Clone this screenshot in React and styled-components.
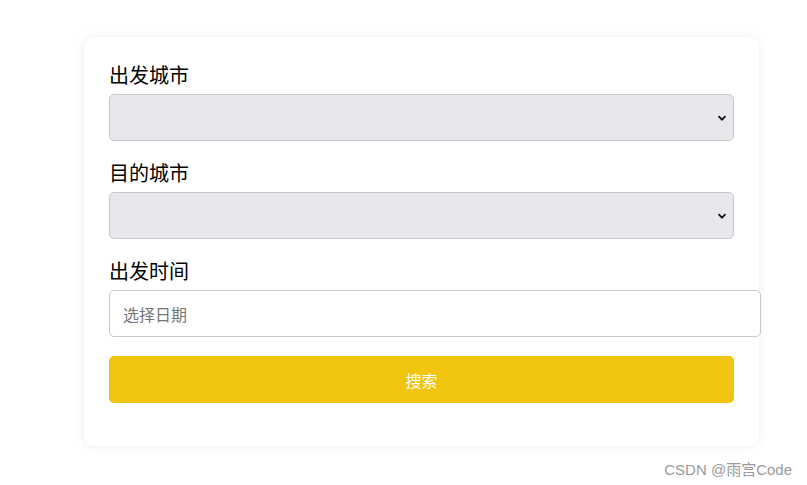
import React from "react";
import styled, { createGlobalStyle } from "styled-components";

const GlobalStyle = createGlobalStyle`
  body {
    margin: 0;
    background: #ffffff;
    font-family: "Microsoft YaHei", "Noto Sans CJK SC", "Noto Sans", sans-serif;
  }
`;

const Page = styled.div`
  position: relative;
  width: 807px;
  height: 485px;
  padding: 37px 0 0 84px;
  box-sizing: border-box;
`;

const Card = styled.form`
  width: 675px;
  box-sizing: border-box;
  padding: 25px 25px 43px;
  background: #ffffff;
  border-radius: 10px;
  box-shadow: 0 0 10px rgba(0, 0, 0, 0.08);
  display: flex;
  flex-direction: column;
  gap: 19px;
`;

const Field = styled.div`
  display: flex;
  flex-direction: column;
  gap: 6px;
`;

const Label = styled.label`
  font-size: 20px;
  line-height: 26px;
  color: #000000;
`;

const SelectWrap = styled.div`
  position: relative;
`;

const Select = styled.select`
  width: 100%;
  height: 47px;
  box-sizing: border-box;
  appearance: none;
  background: #e8e7eb;
  border: 1px solid #c9c9cc;
  border-radius: 5px;
  padding: 0 12px;
  font-size: 16px;
  font-family: inherit;
  outline: none;
`;

const Chevron = styled.svg`
  position: absolute;
  right: 7px;
  top: 50%;
  width: 10px;
  height: 10px;
  margin-top: -5px;
  pointer-events: none;
`;

const DateInput = styled.input`
  width: 100%;
  box-sizing: content-box;
  height: 45px;
  padding: 0 12px 0 13px;
  margin: 0;
  border: 1px solid #c9c9cc;
  border-radius: 5px;
  font-size: 16px;
  font-family: inherit;
  color: #333;
  outline: none;

  &::placeholder {
    color: #757575;
  }
`;

const SearchButton = styled.button`
  height: 47px;
  border: none;
  border-radius: 5px;
  background: #f1c40f;
  color: #ffffff;
  font-size: 16px;
  font-family: inherit;
  cursor: pointer;
`;

const Watermark = styled.div`
  position: absolute;
  right: 15px;
  top: 458px;
  font-size: 15px;
  color: #9a9a9a;
  font-family: "Liberation Sans", "Noto Sans CJK SC", sans-serif;
`;

const Dropdown = ({ label }) => (
  <Field>
    <Label>{label}</Label>
    <SelectWrap>
      <Select defaultValue="">
        <option value=""></option>
      </Select>
      <Chevron viewBox="0 0 10 10">
        <path d="M1.5 3.2 L5 6.7 L8.5 3.2" fill="none" stroke="#111" strokeWidth="1.8" />
      </Chevron>
    </SelectWrap>
  </Field>
);

export default function App() {
  return (
    <Page>
      <GlobalStyle />
      <Card onSubmit={e => e.preventDefault()}>
        <Dropdown label="出发城市" />
        <Dropdown label="目的城市" />
        <Field>
          <Label>出发时间</Label>
          <DateInput placeholder="选择日期" />
        </Field>
        <SearchButton type="submit">搜索</SearchButton>
      </Card>
      <Watermark>CSDN @雨宫Code</Watermark>
    </Page>
  );
}
